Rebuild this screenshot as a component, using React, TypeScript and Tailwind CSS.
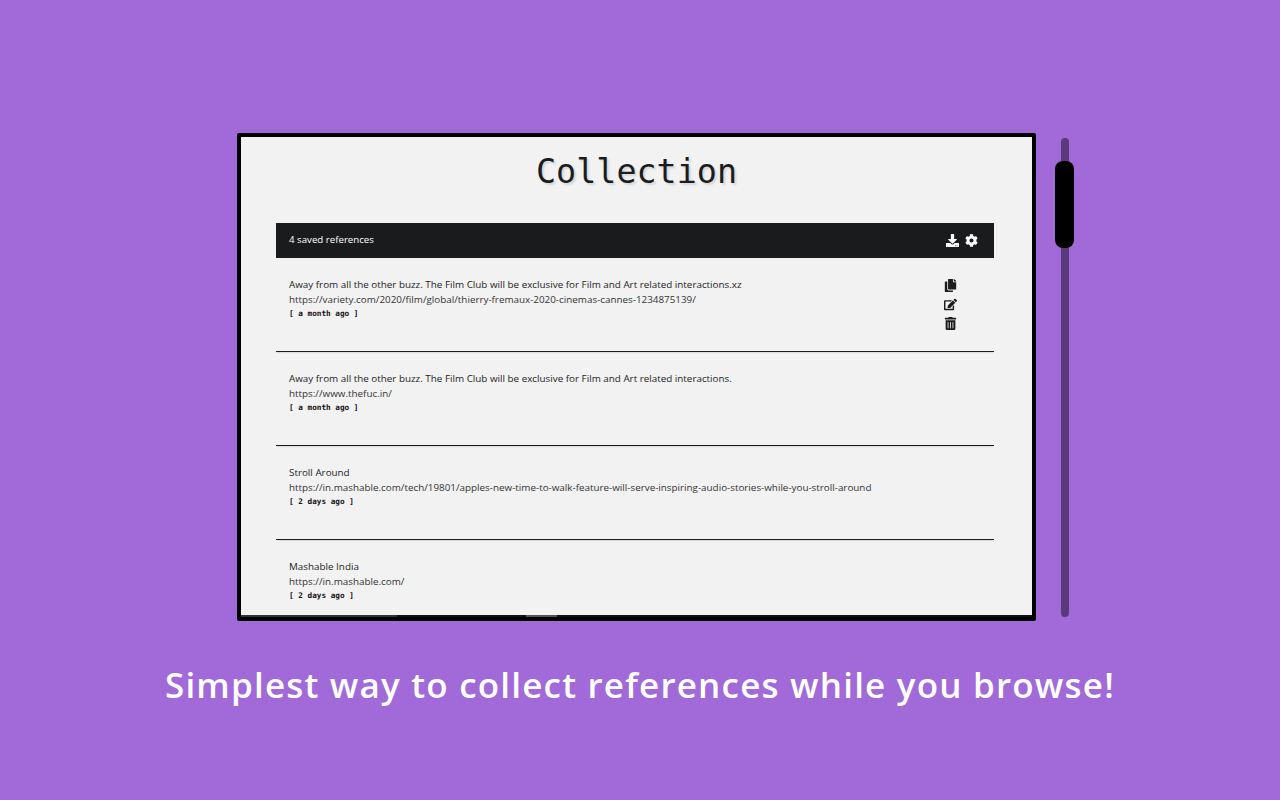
import { FaDownload, FaCog, FaCopy, FaEdit, FaTrashAlt } from 'react-icons/fa';

const items = [
  {
    title: 'Away from all the other buzz. The Film Club will be exclusive for Film and Art related interactions.xz',
    url: 'https://variety.com/2020/film/global/thierry-fremaux-2020-cinemas-cannes-1234875139/',
    age: '[ a month ago ]',
  },
  {
    title: 'Away from all the other buzz. The Film Club will be exclusive for Film and Art related interactions.',
    url: 'https://www.thefuc.in/',
    age: '[ a month ago ]',
  },
  {
    title: 'Stroll Around',
    url: 'https://in.mashable.com/tech/19801/apples-new-time-to-walk-feature-will-serve-inspiring-audio-stories-while-you-stroll-around',
    age: '[ 2 days ago ]',
  },
  {
    title: 'Mashable India',
    url: 'https://in.mashable.com/',
    age: '[ 2 days ago ]',
  },
];

function App() {
  return (
    <div className="min-h-screen bg-[#a269d8] flex flex-col font-['Open_Sans',sans-serif]">
      <div className="flex items-start pt-[133px] pl-[237px]">
        {/* Popup frame */}
        <div className="w-[799px] h-[488px] border-4 border-black rounded-[2px] bg-[#f2f2f2] overflow-hidden flex flex-col">
          <div className="flex-1 min-h-0 overflow-hidden">
            <h1 className="h-[86px] pt-[14px] text-center text-[33.4px] leading-[42px] text-[#1b1c1e] font-['DejaVu_Sans_Mono',monospace] [text-shadow:2px_2px_2px_#d6d6d6]">
              Collection
            </h1>

            <div className="ml-[35px] mr-[38px] flex flex-col">
              <div className="h-[35px] bg-[#1a1b1d] text-white flex items-center justify-between pl-[13px] pr-[16px] text-[9.7px]">
                <span>4 saved references</span>
                <span className="flex items-center gap-[6px] text-[13px]">
                  <FaDownload />
                  <FaCog />
                </span>
              </div>

              {items.map((item, i) => (
                <div key={i} className="relative h-[94px] border-b border-[#1b1c1e] shadow-[0_2px_1px_-1px_#dddddd] pl-[13px] pt-[19px] shrink-0">
                  <p className="text-[9.85px] leading-[15px] text-[#222]">{item.title}</p>
                  <p className="text-[9.85px] leading-[15px] text-[#333]">{item.url}</p>
                  <p className="text-[7.7px] leading-[13px] font-bold text-[#111] font-['DejaVu_Sans_Mono',monospace]">{item.age}</p>
                  {i === 0 && (
                    <div className="absolute left-[668px] top-[21px] flex flex-col items-center gap-[6px] text-[13px] text-[#1b1c1e]">
                      <FaCopy />
                      <FaEdit />
                      <FaTrashAlt />
                    </div>
                  )}
                </div>
              ))}
            </div>
          </div>

          {/* Horizontal scrollbar slivers along the bottom edge */}
          <div className="h-[2px] shrink-0 bg-[#111] flex">
            <div className="w-[156px] bg-[#333]" />
            <div className="ml-[129px] w-[31px] bg-[#555]" />
          </div>
        </div>

        {/* Scroll track */}
        <div className="relative ml-[19px] mt-[5px] w-[19px] h-[479px] flex justify-center">
          <div className="w-[8px] h-full rounded-full bg-[#5b3a7c]" />
          <div className="absolute top-[23px] left-0 w-[19px] h-[87px] rounded-[8px] bg-black" />
        </div>
      </div>

      <p className="mt-[40px] text-center text-[35px] leading-[48px] font-semibold tracking-[1.2px] text-white">
        Simplest way to collect references while you browse!
      </p>
    </div>
  );
}

export default App;
